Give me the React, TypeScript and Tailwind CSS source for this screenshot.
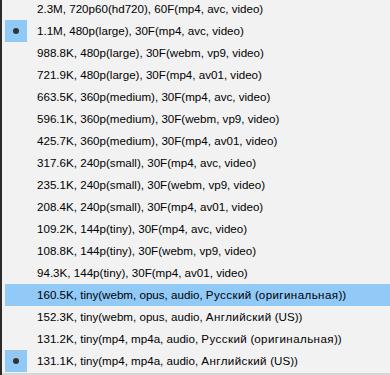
import React from "react";

const rows = [
  "2.3M, 720p60(hd720), 60F(mp4, avc, video)",
  "1.1M, 480p(large), 30F(mp4, avc, video)",
  "988.8K, 480p(large), 30F(webm, vp9, video)",
  "721.9K, 480p(large), 30F(mp4, av01, video)",
  "663.5K, 360p(medium), 30F(mp4, avc, video)",
  "596.1K, 360p(medium), 30F(webm, vp9, video)",
  "425.7K, 360p(medium), 30F(mp4, av01, video)",
  "317.6K, 240p(small), 30F(mp4, avc, video)",
  "235.1K, 240p(small), 30F(webm, vp9, video)",
  "208.4K, 240p(small), 30F(mp4, av01, video)",
  "109.2K, 144p(tiny), 30F(mp4, avc, video)",
  "108.8K, 144p(tiny), 30F(webm, vp9, video)",
  "94.3K, 144p(tiny), 30F(mp4, av01, video)",
  "160.5K, tiny(webm, opus, audio, Русский (оригинальная))",
  "152.3K, tiny(webm, opus, audio, Английский (US))",
  "131.2K, tiny(mp4, mp4a, audio, Русский (оригинальная))",
  "131.1K, tiny(mp4, mp4a, audio, Английский (US))",
];

const checked = [1, 16];
const hovered = 13;

// the cyrillic runs sit a little wider in the original font, loosen them
function Label({ text }: { text: string }) {
  const parts = text.split(/([А-Яа-яЁё]+)/);
  return (
    <span className="ml-[10px] whitespace-nowrap">
      {parts.map((p, i) =>
        /[А-Яа-яЁё]/.test(p) ? (
          <span key={i} className="tracking-[0.4px]">{p}</span>
        ) : (
          <React.Fragment key={i}>{p}</React.Fragment>
        )
      )}
    </span>
  );
}

export default function App() {
  return (
    <div
      className="w-[390px] h-[375px] overflow-hidden bg-[#f2f2f2] border-l-2 border-[#2b2b2b] flex flex-col"
      style={{ fontFamily: '"Liberation Sans", Arial, sans-serif' }}
    >
      <div className="flex-1 overflow-hidden pl-[3px]">
        <div className="-mt-[2px] flex flex-col">
          {rows.map((label, i) => (
            <div
              key={i}
              className={`h-[22px] flex items-center text-[11.6px] text-black ${i === hovered ? "bg-[#91c9f7]" : ""}`}
            >
              <div
                className={`w-[22px] h-[22px] flex items-center justify-center shrink-0 ${checked.includes(i) ? "bg-[#90c8f6]" : ""}`}
              >
                {checked.includes(i) && <span className="w-[6px] h-[6px] rounded-full bg-[#333]" />}
              </div>
              <Label text={label} />
            </div>
          ))}
        </div>
      </div>
      <div className="h-[2px] bg-[#d6d6d6]" />
    </div>
  );
}
